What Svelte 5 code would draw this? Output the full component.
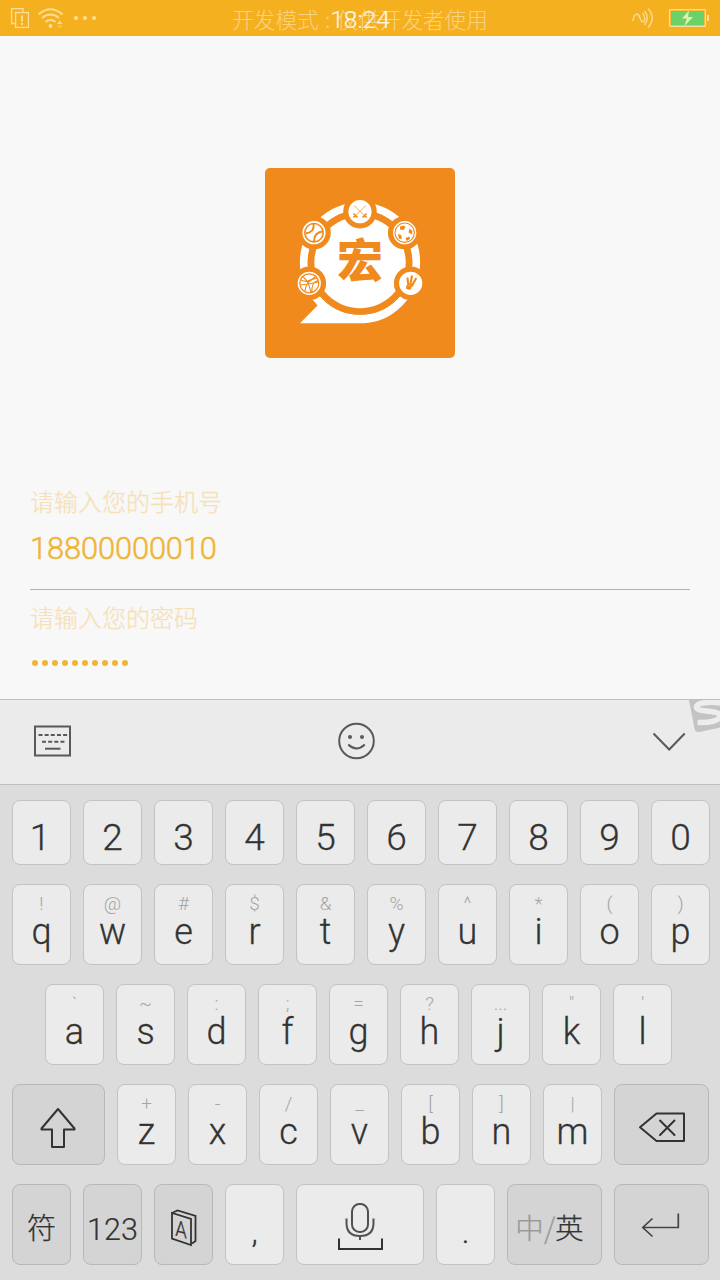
<script>
  const digits = '1234567890'.split('');
  const rowQ = [['!', 'q'], ['@', 'w'], ['#', 'e'], ['$', 'r'], ['&', 't'], ['%', 'y'], ['^', 'u'], ['*', 'i'], ['(', 'o'], [')', 'p']];
  const rowA = [['`', 'a'], ['~', 's'], [':', 'd'], [';', 'f'], ['=', 'g'], ['?', 'h'], ['...', 'j'], ['"', 'k'], ["'", 'l']];
  const rowZ = [['+', 'z'], ['-', 'x'], ['/', 'c'], ['_', 'v'], ['[', 'b'], [']', 'n'], ['|', 'm']];
  const dots = Array.from({ length: 10 });
</script>

{#snippet letter(k)}
  <div class="key">
    <span class="hint">{k[0]}</span>
    <span class="letter">{k[1]}</span>
  </div>
{/snippet}

<div class="screen">
  <header class="status">
    <svg class="left" width="100" height="36" viewBox="0 0 100 36" fill="none" stroke="#fbdc98" stroke-width="1.3">
      <path d="M15 23.5h-3.400V8.600h11.400v3.600" />
      <rect x="15.600" y="12.600" width="12.800" height="14.800" />
      <path d="M22 15.500v6M22 23v2" stroke-width="2" />
      <path d="M38.500 14.500q12-10.500 24 0M42 18q8.500-7 17 0M45.500 22q5-4.200 10 0" stroke-width="1.900" />
      <g fill="#fbdc98" stroke="none">
        <circle cx="50.500" cy="26" r="1.900" />
        <path d="M57 24l2.700-3.500 2.700 3.500z" />
        <path d="M57 25.200l2.700 3 2.700-3z" opacity=".5" />
        <circle cx="76" cy="18" r="2.100" /><circle cx="85" cy="18" r="2.100" /><circle cx="94" cy="18" r="2.100" />
      </g>
    </svg>
    <div class="dev">开发模式<span>:</span>仅供开发者使用</div>
    <div class="time">18:24</div>
    <svg class="right" width="90" height="36" viewBox="630 0 90 36" fill="none">
      <g stroke="#fbd88c" stroke-width="1.500">
        <path d="M633 21c.5-4 2-7 4-7 3 0 3 8 6 8 2.500 0 2.500-6-.5-9" />
        <path d="M644.500 11q5.500 6.500 0 14M648 8.500q8.500 9.500 0 19" />
      </g>
      <rect x="669.600" y="9.600" width="35.800" height="16.800" rx="1" stroke="#fce0a0" stroke-width="1.300" />
      <rect x="671" y="11" width="33" height="14" fill="#6bd268" />
      <path d="M689 10.500l-7 8h4.800l-2.300 7.500 8.500-9h-5z" fill="#ecebb0" />
      <rect x="707" y="15" width="2" height="6" fill="#fce0a0" />
    </svg>
  </header>

  <main>
    <svg class="logo" width="190" height="190" viewBox="0 0 190 190">
      <rect width="190" height="190" rx="5" fill="#f08a1c" />
      <circle cx="95" cy="94.500" r="56.200" fill="none" stroke="#fff" stroke-width="7.800" />
      <path d="M35 155.200L52.500 137.500 48.500 132 53 127.500Q70 149 95 149.500 121 149 138 127L142.500 131.500Q125 154 99 155.200z" fill="#fff" />
      <circle cx="95" cy="94.500" r="52.300" fill="#f08a1c" />
      <circle cx="95" cy="94.500" r="45.700" fill="#fff" />
      <g fill="#fff" stroke="#f08a1c" stroke-width="5.200">
        <circle cx="95" cy="43.700" r="14.200" /><circle cx="49" cy="64.700" r="14.200" /><circle cx="139.700" cy="64.700" r="14.200" />
        <circle cx="44.300" cy="115.300" r="14.200" /><circle cx="145.700" cy="115.300" r="14.200" />
      </g>
      <g stroke="#f08a1c" fill="none">
        <path d="M89 37.500l11 10.500M101 37.500L90 48" stroke-width=".7" />
        <path d="M88.500 45.500l4 4M101.500 45.500l-4 4M91 47l-2.500 2.500M99 47l2.500 2.500" stroke-width="1.700" />
        <circle cx="49" cy="64.700" r="9.200" stroke-width="1.600" />
        <path d="M48.500 56q1.500 7.500-7.500 9.500M57.500 63.500q-8.500 1-8.500 10" stroke-width="1.900" />
        <circle cx="139.700" cy="64.700" r="9.700" stroke-width="1.100" />
        <circle cx="44.300" cy="115.300" r="9.500" stroke-width="1.300" />
        <path d="M36 112q7 4 15-4M35.500 117q9-1 18-3M40 123q1-11 12-13M47 124.500q-1-10 6-12M38 109q5 3 8 15" stroke-width="1.100" />
        <path d="M143.300 117.500l-.8-8M145.200 117.500l1.800-10M146.500 118.500l4.800-8.500" stroke-width="2.100" />
      </g>
      <path d="M135 58.500l4-1 1.500 2-2 2.500-3.500-.5zM144.500 60.500l3 2.500-.5 3.500-3.500-2zM133 66l3 1 1 3.500-2.500.5q-1.500-2.500-1.500-5zM140.500 70l4-1.500.5 2.500-3.500 2zM141.500 117l5.500 1-1.500 3.500q-3 .5-4.500-1z" fill="#f08a1c" />
      <text x="95" y="109" text-anchor="middle" class="mark">宏</text>
    </svg>

    <div class="form">
      <div class="label">请输入您的手机号</div>
      <div class="value">18800000010</div>
      <div class="label second">请输入您的密码</div>
      <div class="dots">{#each dots as _}<i></i>{/each}</div>
    </div>
  </main>

  <section class="tools">
    <svg width="720" height="84" viewBox="0 700 720 84" fill="none" stroke="#595959" stroke-width="2">
      <rect x="35" y="726.500" width="35" height="29" />
      <path d="M38.500 735h29" stroke-dasharray="4 2.150" />
      <path d="M42 741.800h24" stroke-dasharray="4 2.150" />
      <path d="M45 748.700h15.500" />
      <circle cx="356.500" cy="741" r="17.300" />
      <g fill="#595959" stroke="none"><circle cx="350" cy="737" r="2" /><circle cx="362" cy="737" r="2" /></g>
      <path d="M348.300 744.500q8 8 16.500 0M653.500 733.500l15.700 16 15.500-16" />
      <path d="M689 700l5.500 28.500q1 4 5 3.500L720 727.500V700z" fill="#c3c3c3" stroke="none" />
      <path d="M724 703.500C709 701 696 702.500 696.500 707.500S720 710 720 715.500 709 723 697.500 722.500" stroke="#ededed" stroke-width="5.500" />
    </svg>
  </section>

  <section class="keyboard">
    <div class="row digits">{#each digits as d}<div class="key digit">{d}</div>{/each}</div>
    <div class="row">{#each rowQ as k}{@render letter(k)}{/each}</div>
    <div class="row indent">{#each rowA as k}{@render letter(k)}{/each}</div>
    <div class="row">
      <div class="key dark shift">
        <svg width="91" height="79" viewBox="13 1085 91 79" fill="none" stroke="#333" stroke-width="2" stroke-linejoin="round">
          <path d="M58 1109l-16.500 19.500v1h10.500v17.500h12v-17.500h10.500v-1z" />
        </svg>
      </div>
      {#each rowZ as k}{@render letter(k)}{/each}
      <div class="key dark wide">
        <svg width="93" height="79" viewBox="615 1085 93 79" fill="none" stroke="#333" stroke-width="2" stroke-linejoin="round" stroke-linecap="round">
          <path d="M640 1127.300l16.500-13.800h27.500v27.500h-27.500zM660 1120.500l14.500 14.500M674.500 1120.500L660 1135" />
        </svg>
      </div>
    </div>
    <div class="row">
      <div class="key dark cjk">符</div>
      <div class="key dark nums">123</div>
      <div class="key dark">
        <svg width="57" height="79" viewBox="155 1185 57 79" fill="none" stroke="#333" stroke-width="1.800">
          <path d="M172 1213v25.500l19 6.500v-26zM172 1213l5.500-2.500 18 5.500v25l-3.500 2.500" />
          <text x="0" y="0" transform="matrix(.92 .25 0 1.1 175.200 1235.500)" class="book">A</text>
        </svg>
      </div>
      <div class="key punct">,</div>
      <div class="key space">
        <svg width="126" height="79" viewBox="297 1185 126 79" fill="none" stroke="#333" stroke-width="2">
          <path d="M339 1238.500v10.500h43v-10.500" />
          <rect x="352" y="1204" width="16" height="28" rx="7.500" stroke="#505050" />
          <path d="M346.500 1218.500v4.500q0 13 13.500 13t13.500-13v-4.500M360 1236v4" stroke="#505050" />
        </svg>
      </div>
      <div class="key punct">.</div>
      <div class="key dark wide lang"><span>中</span><em>/</em><b>英</b></div>
      <div class="key dark wide">
        <svg width="93" height="79" viewBox="615 1185 93 79" fill="none" stroke="#444" stroke-width="1.700">
          <path d="M678.300 1213.500v14h-35M652.500 1218.500l-9.700 9 9.700 9" />
        </svg>
      </div>
    </div>
  </section>
</div>

<style>
  :global(body) { margin: 0; }
  .screen { width: 720px; height: 1280px; display: flex; flex-direction: column; overflow: hidden; background: #f8f8f8; font-family: Roboto, "Noto Sans CJK SC", sans-serif; font-weight: 300; }
  svg { display: block; flex: none; }
  .status { position: relative; height: 36px; flex: none; display: flex; background: #f5b01f; }
  .right { margin-left: auto; }
  .dev { width: 260px; margin-left: 130px; text-align: center; white-space: nowrap; font: 300 21.600px/38px "Noto Sans CJK SC", sans-serif; color: rgba(255, 255, 255, .45); }
  .dev span { display: inline-block; width: 18px; }
  .time { position: absolute; left: 0; right: 0; top: 0; text-align: center; font-size: 24.500px; line-height: 39px; color: rgba(255, 255, 255, .85); -webkit-text-stroke: .2px; }
  main { height: 663px; flex: none; display: flex; flex-direction: column; align-items: center; }
  .logo { margin-top: 132px; }
  .mark { font: 900 46px "Noto Sans CJK SC", sans-serif; fill: #f08a1c; }
  .form { width: 660px; margin-top: 125px; }
  .label { height: 36px; font: 300 24px/36px "Noto Sans CJK SC", sans-serif; color: #f6e1b6; -webkit-text-stroke: .25px; }
  .value { height: 70px; border-bottom: 1px solid #ecb331; font-size: 30.800px; letter-spacing: -.1px; line-height: 59px; color: #efb536; -webkit-text-stroke: .5px; }
  .second { margin-top: 9px; }
  .dots { display: flex; gap: 4px; padding: 25px 2px 0; }
  .dots i { width: 6px; height: 6px; border-radius: 50%; background: #efb536; }
  .tools { height: 84px; flex: none; border-top: 1px solid #bfbfbf; border-bottom: 1px solid #bfbfbf; background: #ebebeb; }
  .keyboard { flex: 1; display: flex; flex-direction: column; gap: 19px; padding: 15px 10px 15px 12px; background: #dcdcdc; color: #333; }
  .row { display: flex; gap: 12px; height: 81px; flex: none; }
  .digits { height: 65px; }
  .indent { padding-left: 33px; }
  .key { box-sizing: border-box; width: 59px; flex: none; border: 1px solid #c3c3c3; border-radius: 8px; background: #ebebeb; display: flex; flex-direction: column; align-items: center; white-space: nowrap; }
  .dark { background: #d4d4d4; border-color: #b8b8b8; }
  .digit { font-size: 37px; line-height: 73px; -webkit-text-stroke: .3px; }
  .digit:first-child { padding-right: 3px; }
  .hint { margin-top: 9px; font-size: 19px; line-height: 20px; height: 21px; color: #a5a5a5; }
  .letter { font-size: 36px; line-height: 35px; -webkit-text-stroke: .3px; }
  .shift { width: 93px; }
  .wide { width: 95px; }
  .space { width: 128px; }
  .cjk { font: 300 29px/82px "Noto Sans CJK SC", sans-serif; -webkit-text-stroke: .25px; }
  .nums { font-size: 30.500px; line-height: 89px; -webkit-text-stroke: .2px; }
  .punct { font-size: 32px; line-height: 94px; -webkit-text-stroke: .3px; }
  .lang { flex-direction: row; justify-content: center; padding-right: 10px; font: 300 28.500px/84px "Noto Sans CJK SC", sans-serif; align-items: flex-start; -webkit-text-stroke: .25px; }
  .lang span, .lang em { color: #999; font-style: normal; }
  .lang b { font-weight: 300; }
  .book { font: 300 20px Roboto, sans-serif; fill: #333; stroke: #333; stroke-width: .3; }
</style>
